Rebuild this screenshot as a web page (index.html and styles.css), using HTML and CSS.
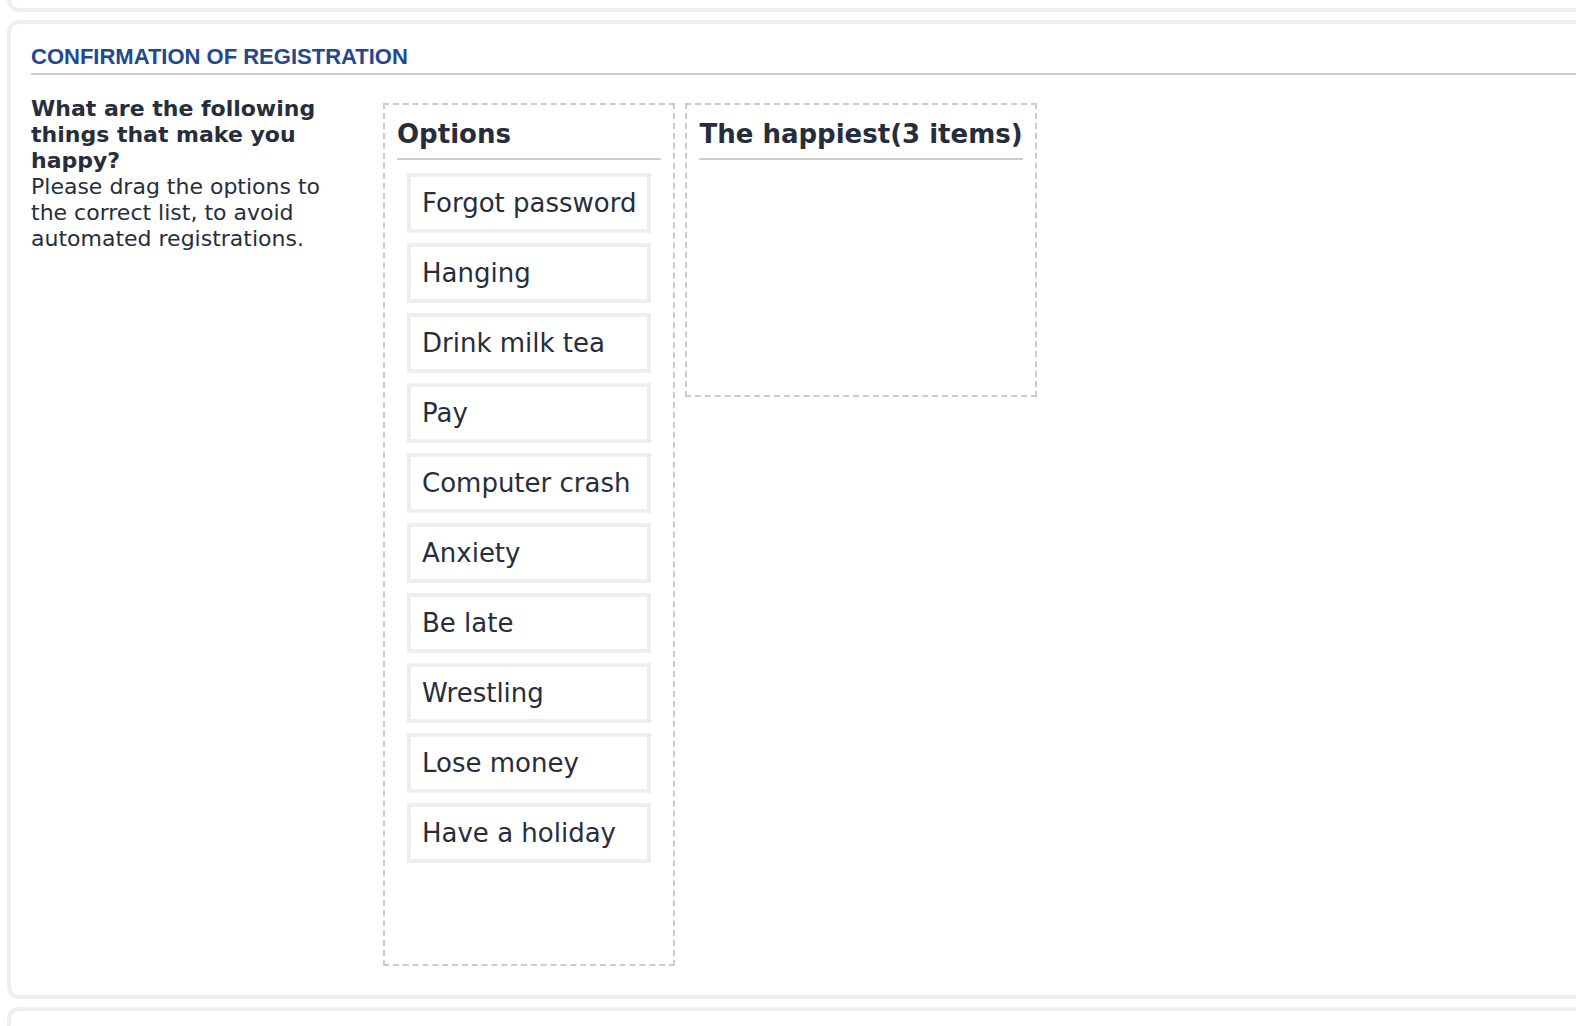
FILE: index.html
```html
<!DOCTYPE html>
<html lang="en">
<head>
<meta charset="utf-8">
<title>Confirmation of registration</title>
<link rel="stylesheet" href="styles.css">
</head>
<body>
<div class="card card-prev"></div>
<div class="card card-main">
  <h2 class="section-title">CONFIRMATION OF REGISTRATION</h2>
  <div class="quiz">
    <div class="question">
      <strong>What are the following things that make you happy?</strong><br>
      Please drag the options to the correct list, to avoid automated registrations.
    </div>
    <div class="list-box">
      <div class="list-title">Options</div>
      <ul class="list list-options">
        <li class="item">Forgot password</li>
        <li class="item">Hanging</li>
        <li class="item">Drink milk tea</li>
        <li class="item">Pay</li>
        <li class="item">Computer crash</li>
        <li class="item">Anxiety</li>
        <li class="item">Be late</li>
        <li class="item">Wrestling</li>
        <li class="item">Lose money</li>
        <li class="item">Have a holiday</li>
      </ul>
    </div>
    <div class="list-box">
      <div class="list-title">The happiest(3 items)</div>
      <ul class="list list-target"></ul>
    </div>
  </div>
</div>
<div class="card card-next"></div>
</body>
</html>
```

FILE: styles.css
```css
html, body {
  margin: 0;
  padding: 0;
  background: #ffffff;
  overflow: hidden;
}

body {
  height: 1026px;
  padding-left: 7px;
  font-family: "DejaVu Sans", Verdana, sans-serif;
  color: #272e3b;
}

.card {
  box-sizing: border-box;
  width: calc(100% + 40px);
  border: 4px solid #eeeeee;
  border-radius: 12px;
  background: #ffffff;
  margin-bottom: 8px;
}

.card-prev {
  height: 100px;
  margin-top: -88px;
}

.card-next {
  height: 100px;
  margin-bottom: 0;
}

.card-main {
  padding: 20px 20px 29px 20px;
}

.section-title {
  margin: 0;
  font-family: "Liberation Sans", Arial, sans-serif;
  font-weight: bold;
  font-size: 22px;
  line-height: 26px;
  color: #22498f;
  padding-bottom: 3px;
  border-bottom: 2px solid #cccccc;
}

.quiz {
  display: flex;
  align-items: flex-start;
  margin-top: 19px;
}

.question {
  width: 320px;
  margin-top: 2px;
  margin-right: 32px;
  font-size: 22px;
  line-height: 26px;
}

.question strong {
  font-weight: bold;
}

.list-box {
  margin-top: 9px;
  margin-right: 10px;
  border: 2px dashed #c9cdd2;
  padding: 14px 12px 0 12px;
}

.list-title {
  font-weight: bold;
  font-size: 26px;
  line-height: 30px;
  white-space: nowrap;
  padding-bottom: 9px;
  border-bottom: 2px solid #cccccc;
}

.list {
  list-style: none;
  margin: 0;
  padding: 13px 10px 0 10px;
}

.list-options {
  padding-bottom: 101px;
}

.list-target {
  min-height: 222px;
}

.item {
  border: 4px solid #eeeeee;
  padding: 11px;
  font-size: 26px;
  line-height: 30px;
  white-space: nowrap;
  margin-bottom: 10px;
}

.item:last-child {
  margin-bottom: 0;
}
```
